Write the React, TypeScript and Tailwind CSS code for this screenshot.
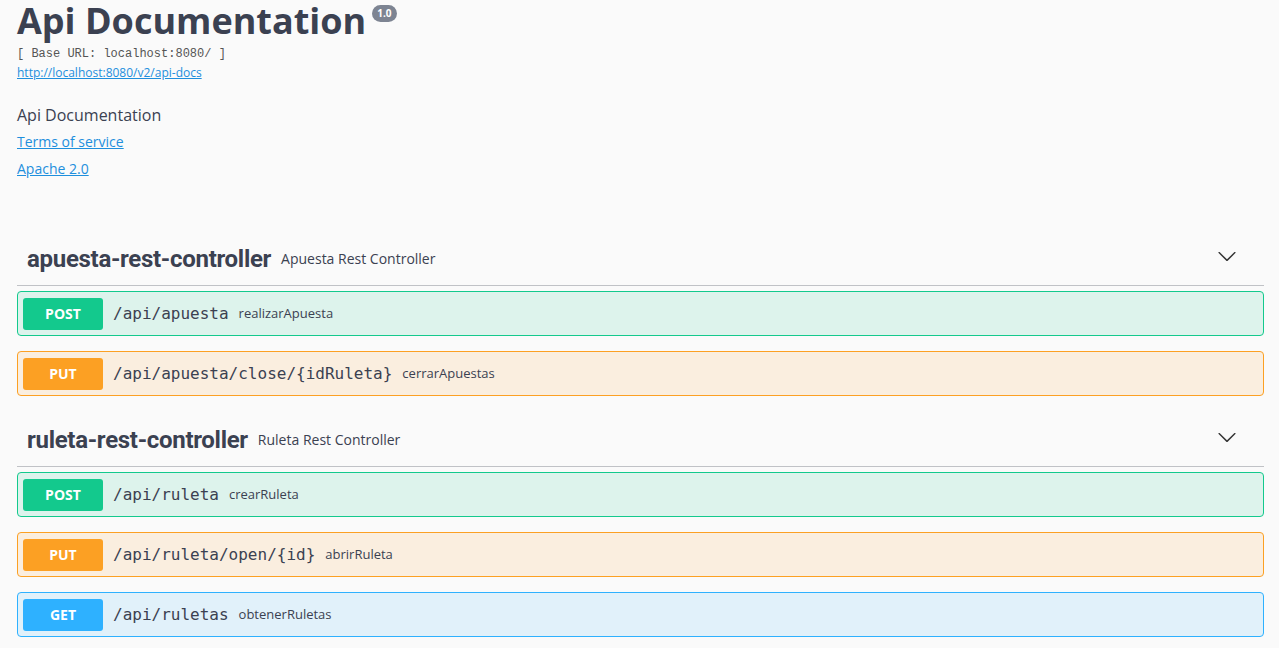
const ops = {
  POST: {
    block: "border-[#13c98d] bg-[#13c98d]/12",
    badge: "bg-[#13c98d]",
  },
  PUT: {
    block: "border-[#fca023] bg-[#fca023]/12",
    badge: "bg-[#fca023]",
  },
  GET: {
    block: "border-[#2eb1ff] bg-[#2eb1ff]/12",
    badge: "bg-[#2eb1ff]",
  },
};

type Method = keyof typeof ops;

const Chevron = () => (
  <svg width="20" height="20" viewBox="0 0 20 20" className="fill-[#333]">
    <path d="M17.418 6.109c.272-.268.709-.268.979 0s.271.701 0 .969l-7.908 7.83c-.27.268-.707.268-.979 0l-7.908-7.83c-.27-.268-.27-.701 0-.969.271-.268.709-.268.979 0L10 13.25l7.418-7.141z" />
  </svg>
);

const Operation = ({
  method,
  path,
  summary,
}: {
  method: Method;
  path: string;
  summary: string;
}) => (
  <div
    className={`mb-[15px] flex h-[45px] items-center rounded-[4px] border px-[5px] ${ops[method].block}`}
  >
    <span
      className={`flex h-8 w-20 items-center justify-center rounded-[3px] font-['Open_Sans',sans-serif] text-[14px] font-bold text-white ${ops[method].badge}`}
    >
      {method}
    </span>
    <span className="px-[10px] font-['DejaVu_Sans_Mono',monospace] text-[16px] text-[#3b4151]">
      {path}
    </span>
    <span className="font-['Open_Sans',sans-serif] text-[13px] text-[#3b4151]">
      {summary}
    </span>
  </div>
);

const TagSection = ({
  name,
  description,
  children,
}: {
  name: string;
  description: string;
  children: React.ReactNode;
}) => (
  <section>
    <div className="mb-[5px] flex h-[54px] items-center border-b border-[#3b4151]/30 pl-[10px] pr-[27px]">
      <h4 className="font-['Roboto',sans-serif] text-[24px] font-bold tracking-[-0.3px] text-[#3b4151]">
        {name}
      </h4>
      <small className="pl-[10px] font-['Open_Sans',sans-serif] text-[14px] text-[#3b4151]">
        {description}
      </small>
      <div className="ml-auto -mt-[6px]">
        <Chevron />
      </div>
    </div>
    {children}
  </section>
);

export default function App() {
  return (
    <div className="min-h-[648px] bg-[#fafafa] pl-[17px] pr-[15px] text-[#3b4151]">
      <div className="font-['Open_Sans',sans-serif]">
        <div className="flex items-start">
          <h2 className="text-[36px] font-bold leading-[42px]">
            Api Documentation
          </h2>
          <span className="ml-[6px] mt-[5px] rounded-full bg-[#7d8492] px-[5px] py-[1px] text-[10px] font-bold leading-[15px] text-white">
            1.0
          </span>
        </div>
        <pre className="mt-[4px] font-['Liberation_Mono',monospace] text-[12px] leading-[16px] text-[#555]">
          [ Base URL: localhost:8080/ ]
        </pre>
        <a
          href="#"
          className="mt-[3px] block text-[12px] leading-[16px] text-[#1e8fdd] underline"
        >
          http://localhost:8080/v2/api-docs
        </a>
        <p className="mt-[22px] text-[16px] leading-[24px]">Api Documentation</p>
        <a
          href="#"
          className="mt-[4px] block text-[14px] leading-[22px] text-[#1e8fdd] underline"
        >
          Terms of service
        </a>
        <a
          href="#"
          className="mt-[5px] block text-[14px] leading-[22px] text-[#1e8fdd] underline"
        >
          Apache 2.0
        </a>
      </div>

      <div className="mt-[52px]">
        <TagSection name="apuesta-rest-controller" description="Apuesta Rest Controller">
          <Operation method="POST" path="/api/apuesta" summary="realizarApuesta" />
          <Operation method="PUT" path="/api/apuesta/close/{idRuleta}" summary="cerrarApuestas" />
        </TagSection>
        <div className="mt-[17px]">
          <TagSection name="ruleta-rest-controller" description="Ruleta Rest Controller">
            <Operation method="POST" path="/api/ruleta" summary="crearRuleta" />
            <Operation method="PUT" path="/api/ruleta/open/{id}" summary="abrirRuleta" />
            <Operation method="GET" path="/api/ruletas" summary="obtenerRuletas" />
          </TagSection>
        </div>
      </div>
    </div>
  );
}
